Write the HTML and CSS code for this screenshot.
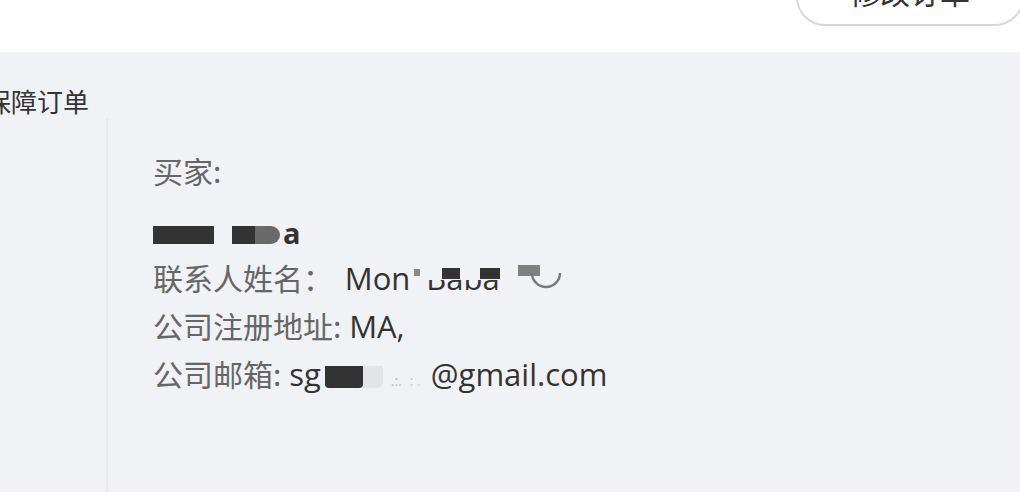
FILE: index.html
```html
<!DOCTYPE html>
<html lang="zh">
<head>
<meta charset="utf-8">
<link rel="stylesheet" href="styles.css">
</head>
<body>
<header class="top">
  <button class="btn">修改订单</button>
</header>
<main class="main">
  <h2 class="title">保障订单</h2>
  <section class="row">
    <div class="side"></div>
    <div class="content">
      <div class="line label">买家:</div>
      <div class="line name"><span class="red r-a"></span><span class="red r-b"></span><span class="red r-c"></span><span class="name-tail">a</span></div>
      <div class="line"><span class="label">联系人姓名：</span> <span class="val mon">Mon<span class="mini"></span><span class="cover">Baba</span><span class="red r-d"></span><svg class="arc" width="32" height="26" viewBox="0 0 32 26"><path d="M2 4 A14 14 0 0 0 30 4" fill="none" stroke="#7a7a7a" stroke-width="2.5"/></svg></span></div>
      <div class="line"><span class="label">公司注册地址:</span> <span class="val">MA,</span></div>
      <div class="line"><span class="label">公司邮箱:</span> <span class="val">sg<span class="red r-e"></span><span class="red r-f"></span><span class="faint">.:.</span><span class="faint2">: .</span>@gmail.com</span></div>
    </div>
  </section>
</main>
</body>
</html>
```

FILE: styles.css
```css
* { box-sizing: border-box; }
html, body { margin: 0; padding: 0; }
body {
  width: 1020px;
  height: 492px;
  overflow: hidden;
  background: #f1f2f6;
  font-family: "Open Sans", "Noto Sans CJK SC", sans-serif;
  display: flex;
  flex-direction: column;
}
.top {
  height: 52px;
  flex: 0 0 52px;
  background: #ffffff;
  display: flex;
  justify-content: flex-end;
  overflow: hidden;
}
.btn {
  width: 228px;
  height: 58px;
  margin-top: -32px;
  margin-right: -4px;
  border: 2px solid #d8d8d8;
  border-radius: 30px;
  background: #fff;
  color: #333;
  font-family: "Noto Sans CJK SC", sans-serif;
  font-size: 30px;
  line-height: 30px;
  padding: 6px 0 0 0;
  align-self: flex-start;
  display: flex;
  align-items: flex-start;
  justify-content: center;
}
.main {
  flex: 1;
  min-height: 0;
  padding-top: 31px;
  display: flex;
  flex-direction: column;
}
.title {
  margin: 0 0 0 -15px;
  height: 36px;
  font-family: "Noto Sans CJK SC", sans-serif;
  font-weight: 400;
  font-size: 26px;
  line-height: 36px;
  color: #333;
}
.row {
  display: flex;
  flex: 1;
  min-height: 0;
}
.side {
  width: 108px;
  border-right: 2px solid #e6e7eb;
}
.content {
  padding: 27px 0 0 45px;
  color: #333;
  font-size: 30px;
}
.line {
  height: 48px;
  line-height: 48px;
  white-space: nowrap;
}
.label {
  color: #666;
  font-family: "Noto Sans CJK SC", sans-serif;
}
.line.label { margin-bottom: 21px; }
.val { color: #333; font-size: 31px; }
.mon { margin-left: 4px; }
.line.name {
  height: 38px;
  display: flex;
  align-items: center;
  font-weight: 700;
  font-size: 29px;
}
.red {
  display: inline-block;
  background: #333;
}
.r-a { width: 61px; height: 18px; margin-top: 2px; }
.r-b { width: 23px; height: 18px; margin-left: 18px; margin-top: 2px; }
.r-c { width: 25px; height: 18px; background: #6a6a6a; border-radius: 0 9px 9px 0; margin-top: 2px; }
.name-tail { margin-left: 3px; line-height: 1; margin-top: -4px; }
.mini {
  display: inline-block;
  width: 6px;
  height: 7px;
  background: #888;
  vertical-align: 14px;
  margin-left: 4px;
}
.cover {
  position: relative;
  margin-left: 6px;
}
.cover::before {
  content: "";
  position: absolute;
  left: 0;
  right: 0;
  top: 10px;
  height: 13px;
  background: #f1f2f6;
}
.cover::after {
  content: "";
  position: absolute;
  left: 16px;
  width: 58px;
  top: 11px;
  height: 11px;
  background: linear-gradient(90deg, #333 0 18px, transparent 18px 38px, #333 38px 58px);
}
.r-d {
  width: 22px;
  height: 11px;
  background: #808080;
  margin-left: 18px;
  vertical-align: 14px;
}
.arc {
  vertical-align: -5px;
  margin-left: -10px;
}
.r-e { width: 38px; height: 22px; vertical-align: -2px; border-radius: 0 0 4px 4px; margin-left: 4px; }
.r-f { width: 20px; height: 22px; background: #e3e4e8; vertical-align: -2px; border-radius: 0 0 6px 0; }
.faint { color: #bbb; font-size: 14px; margin-left: 8px; }
.faint2 { color: #ccc; font-size: 14px; margin-left: 8px; margin-right: 10px; }
```
